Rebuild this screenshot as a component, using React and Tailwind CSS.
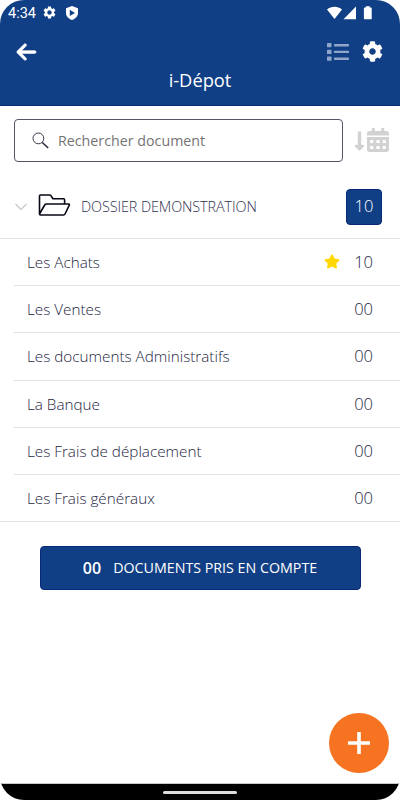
import { FaCog, FaLongArrowAltDown, FaCalendarAlt, FaStar } from 'react-icons/fa'
import { FaArrowLeft } from 'react-icons/fa6'
import { MdSettings } from 'react-icons/md'

const CATEGORIES = [
  { label: 'Les Achats', count: '10', starred: true },
  { label: 'Les Ventes', count: '00' },
  { label: 'Les documents Administratifs', count: '00' },
  { label: 'La Banque', count: '00' },
  { label: 'Les Frais de déplacement', count: '00' },
  { label: 'Les Frais généraux', count: '00' },
]

function StatusBar() {
  return (
    <div className="flex h-[25px] items-center pl-2 text-white">
      <span className="mt-[3px] w-[34px] font-['Roboto',sans-serif] text-[14.5px] leading-none">4:34</span>
      <MdSettings className="h-[15px] w-[15px]" />
      <svg className="ml-2 h-[14px] w-[14px]" viewBox="0 0 14 14">
        <path
          fillRule="evenodd"
          fill="currentColor"
          d="M7 0 13 2.2V7c0 3.2-2.4 5.8-6 7-3.6-1.2-6-3.8-6-7V2.2ZM4.8 3.7v6.4L10 6.9Z"
        />
      </svg>
      <svg className="ml-auto mr-[28px] h-[14px] w-[45px]" viewBox="0 0 45 14" fill="currentColor">
        <path d="M0 3.5C4.2-.2 10.8-.2 15 3.5L7.5 13Z" />
        <path d="M29 .5V13.3H16.5Z" />
        <path d="M38.8.2h4v1.3h1q.9 0 .9.9v10q0 .9-.9.9h-6q-.9 0-.9-.9v-10q0-.9.9-.9h1Z" />
      </svg>
    </div>
  )
}

function Header() {
  return (
    <header className="h-[106px] border-b border-[#0a2f73] bg-[#113f85] text-white">
      <StatusBar />
      <div className="flex h-[53px] items-center pl-4 pr-[17px]">
        <FaArrowLeft className="h-[22px] w-[21px]" stroke="currentColor" strokeWidth="14" />
        <svg className="ml-auto mr-[13px] h-[18px] w-[22px] text-[#8fa5ca]" viewBox="0 0 22 18" fill="currentColor">
          <rect x="0" y="0" width="4.5" height="4.2" rx=".6" />
          <rect x="0" y="6.8" width="4.5" height="4.2" rx=".6" />
          <rect x="0" y="13.6" width="4.5" height="4.2" rx=".6" />
          <rect x="7" y="1" width="15" height="2.4" rx=".6" />
          <rect x="7" y="7.7" width="15" height="2.4" rx=".6" />
          <rect x="7" y="14.5" width="15" height="2.4" rx=".6" />
        </svg>
        <FaCog className="h-[21px] w-[21px]" />
      </div>
      <h1 className="-mt-[10px] text-center text-[18.3px] leading-6">i-Dépot</h1>
    </header>
  )
}

function SearchRow() {
  return (
    <div className="mt-[13px] flex h-[43px] items-center pl-[14px]">
      <div className="flex h-[43px] w-[329px] items-center rounded-[4px] border border-[#55556a] pl-[17px]">
        <svg className="h-[17px] w-[17px]" viewBox="0 0 17 17" fill="none" stroke="#222238">
          <circle cx="6.4" cy="6.4" r="5.4" strokeWidth=".9" />
          <path d="m10.3 10.4 5.9 5.7" strokeWidth="1.4" />
        </svg>
        <span className="ml-[9px] text-[14.25px] text-[#747474]">Rechercher document</span>
      </div>
      <FaLongArrowAltDown className="ml-[10px] h-[22px] w-[13px] text-[#d2d2d2]" />
      <FaCalendarAlt
        className="mb-[2px] ml-px h-[24px] w-[22px] text-[#d2d2d2]"
        preserveAspectRatio="none"
      />
    </div>
  )
}

function FolderRow() {
  return (
    <div className="mt-[13px] flex h-[64px] items-center border-b border-[#dfe4ea] pl-[14px] pr-[18px]">
      <svg className="h-[8px] w-[14px]" viewBox="0 0 14 8" fill="none" stroke="#c4c4c4" strokeWidth="1.1">
        <path d="m1.5 1 5.5 5.5L12.5 1" />
      </svg>
      <svg
        className="ml-[10px] mb-[3px] h-[22px] w-[33px]"
        viewBox="0 0 33 22"
        fill="none"
        stroke="#080814"
        strokeWidth="1.6"
        strokeLinejoin="round"
      >
        <path d="M1.5 20V2q0-1 1-1h9.3q.7 0 1.1.6l2.1 3.1h10.6q1 0 1 1V10M1.5 20 6.7 11q.6-1 1.6-1h22.3q1.2 0 .7 1.2L27 20q-.5 1-1.5 1h-23q-1 0-1-1Z" />
      </svg>
      <span className="ml-[10px] text-[14.4px] font-light tracking-[-0.1px] text-[#30304e]">DOSSIER DEMONSTRATION</span>
      <span className="ml-auto flex h-9 w-9 items-center justify-center rounded-[4px] border border-[#082978] bg-[#113f85] text-[16.5px] font-light text-white">
        10
      </span>
    </div>
  )
}

function CategoryRow({ label, count, starred }) {
  return (
    <li className="flex h-[47.2px] items-center border-b border-[#e2e2e4] pl-[13px] pr-[27px] text-[#26263f] last:-ml-[14px] last:pl-[27px]">
      <span className="text-[15.25px] leading-5 font-light">{label}</span>
      {starred && <FaStar className="mb-px ml-auto mr-[14px] h-[15px] w-[16px] text-[#ffd800]" />}
      <span className={starred ? 'text-[16.5px] leading-5 font-light' : 'ml-auto text-[16.5px] leading-5 font-light'}>
        {count}
      </span>
    </li>
  )
}

export default function App() {
  return (
    <div className="h-[800px] w-[400px] bg-white">
      <div className="relative flex h-[800px] flex-col overflow-hidden rounded-[24px] bg-white font-['Open_Sans',sans-serif]">
        <Header />
        <SearchRow />
        <FolderRow />
        <ul className="pl-[14px]">
          {CATEGORIES.map(c => (
            <CategoryRow key={c.label} label={c.label} count={c.count} starred={c.starred} />
          ))}
        </ul>
        <button className="mx-auto mt-[24px] flex h-[44px] w-[321px] items-center justify-center rounded-[4px] border border-[#082978] bg-[#113f85] text-white">
          <span className="text-[16px] font-semibold">00</span>
          <span className="ml-3 text-[14.25px]">DOCUMENTS PRIS EN COMPTE</span>
        </button>
        <button className="absolute bottom-[27px] right-[11px] flex h-[60px] w-[60px] items-center justify-center rounded-full bg-[#f67421]">
          <svg className="h-[22px] w-[22px]" viewBox="0 0 22 22" stroke="#fff" strokeWidth="3.6">
            <path d="M11 0v22M0 11h22" />
          </svg>
        </button>
        <div className="mt-auto flex h-[17px] items-center justify-center border-t border-[#c9c9c9] bg-black">
          <div className="h-[3px] w-[74px] rounded-full bg-[#dedede]" />
        </div>
      </div>
    </div>
  )
}
